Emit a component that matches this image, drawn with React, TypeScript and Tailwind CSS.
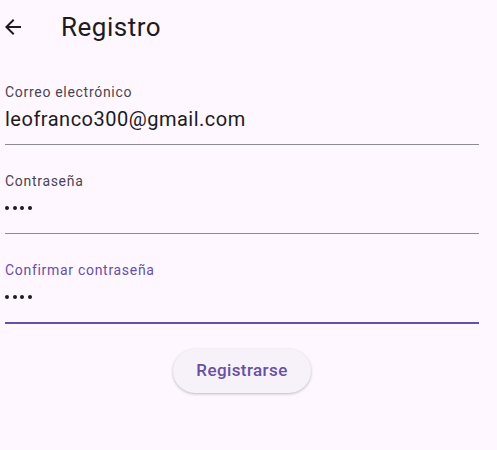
const font = { fontFamily: "Roboto, 'Liberation Sans', sans-serif" };

function Field({
  label,
  value,
  focused = false,
  password = false,
}: {
  label: string;
  value: string;
  focused?: boolean;
  password?: boolean;
}) {
  return (
    <div
      className={`flex flex-col pt-[4px] pb-[7px] ${
        focused ? "border-b-2 border-[#6750A4]" : "border-b border-[#8f8b94]"
      }`}
    >
      <span
        className={`text-[14px] leading-[18px] tracking-[0.7px] ${
          focused ? "text-[#6750A4]" : "text-[#49454F]"
        }`}
      >
        {label}
      </span>
      {password ? (
        <span className="h-[36px] flex items-center gap-[3.5px]">
          {value.split("").map((_, i) => (
            <span key={i} className="w-[4px] h-[4px] rounded-full bg-[#1D1B20]" />
          ))}
        </span>
      ) : (
        <span className="h-[36px] flex items-center text-[20px] tracking-[0.5px] text-[#1D1B20]">
          {value}
        </span>
      )}
    </div>
  );
}

export default function App() {
  return (
    <div className="w-[497px] h-[450px] bg-[#FEF7FF] overflow-hidden" style={font}>
      {/* App bar */}
      <div className="flex items-center h-[54px] pl-[1px]">
        <svg width="24" height="24" viewBox="0 0 24 24" className="text-[#1D1B20]">
          <path
            d="M20 11H7.83l5.59-5.59L12 4l-8 8 8 8 1.41-1.41L7.83 13H20v-2z"
            fill="currentColor"
          />
        </svg>
        <span className="ml-[36px] text-[26px] tracking-[0.5px] text-[#1D1B20]">Registro</span>
      </div>

      {/* Form */}
      <div className="w-[474px] ml-[5px] flex flex-col gap-[23px] mt-[25px]">
        <Field label="Correo electrónico" value="leofranco300@gmail.com" />
        <Field label="Contraseña" value="1234" password />
        <Field label="Confirmar contraseña" value="1234" password focused />
      </div>

      <div className="w-[474px] ml-[5px] flex justify-center mt-[25px]">
        <button className="w-[138px] h-[44px] rounded-full bg-[#F7F2FA] shadow-[0_1px_3px_rgba(0,0,0,0.25)] text-[#6750A4] text-[17px] tracking-[0.4px] font-medium">
          Registrarse
        </button>
      </div>
    </div>
  );
}
